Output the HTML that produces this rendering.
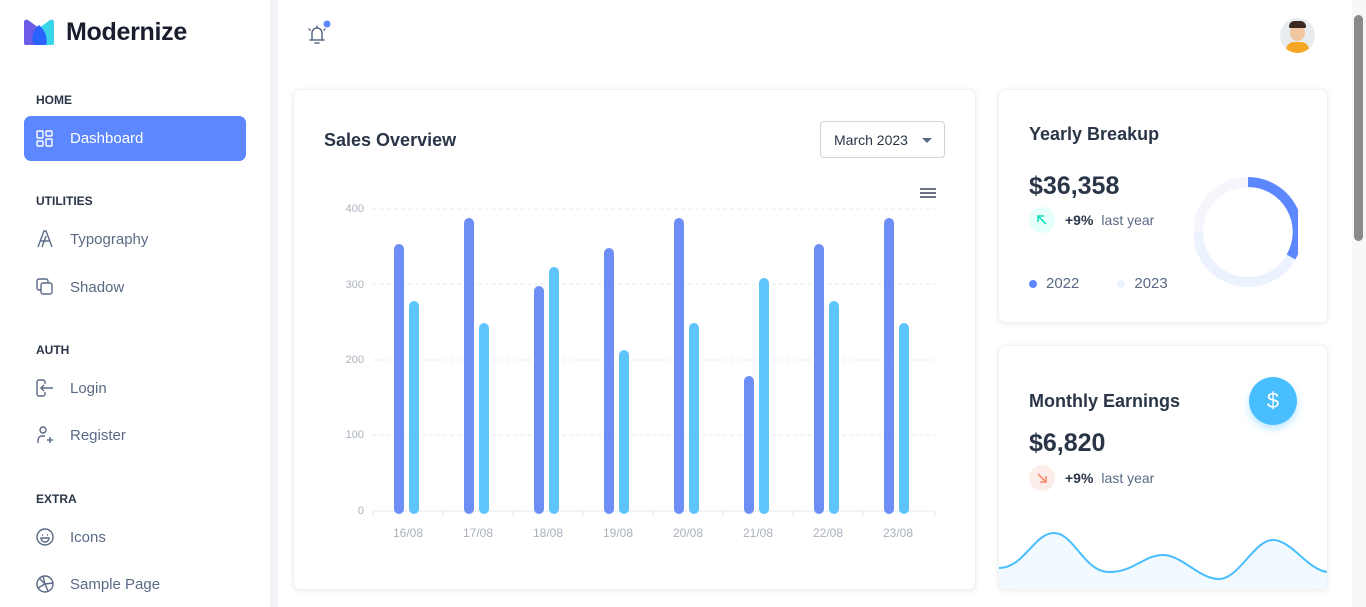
<!DOCTYPE html><html><head><style>
*{margin:0;padding:0;box-sizing:border-box}
body{width:1366px;height:607px;overflow:hidden;background:#fff;font-family:"Liberation Sans",sans-serif;color:#2a3547;position:relative}
.sb{position:absolute;left:0;top:0;width:270px;height:607px;background:#fff}
.strip{position:absolute;left:270px;top:0;width:8px;height:607px;background:#f2f4f7}
.logo{position:absolute;left:22px;top:18px;display:flex;align-items:center}
.logo span{font-size:25px;font-weight:bold;color:#1a1d2e;margin-left:10px;letter-spacing:-0.3px}
.cap{position:absolute;left:36px;font-size:12px;font-weight:bold;color:#2a3547}
.it{position:absolute;left:36px;font-size:15px;color:#5a6a85;display:flex;align-items:center}
.it svg{margin-right:16px}
.act{position:absolute;left:24px;top:116px;width:222px;height:45px;background:#5d87ff;border-radius:7px;color:#fff;font-size:15px;display:flex;align-items:center;padding-left:12px}
.card{position:absolute;background:#fff;border-radius:7px;box-shadow:0 1px 6px rgba(0,0,0,.08);border:1px solid #f0f2f5}
.t{position:absolute;font-size:18px;font-weight:bold;color:#2a3547}
.big{position:absolute;font-size:25px;font-weight:bold;color:#2a3547}
.pct{position:absolute;font-size:14px;display:flex;align-items:center}
.pct b{color:#2a3547;margin:0 8px 0 10px}
.pct i{font-style:normal;color:#5a6a85}
</style></head><body>
<div class="sb">
<div class="logo"><svg width="34" height="28" viewBox="0 0 34 28"><path d="M2 3C2 1 4 0 6 1L17 9 17 26 4 26C2 26 2 25 2 23Z" fill="#6c5ce7"/><path d="M32 3C32 1 30 0 28 1L17 9 17 26 30 26C32 26 32 25 32 23Z" fill="#3ad6e8"/><path d="M17 6C10 12 9 20 12 26L24 26C26 20 24 12 17 6Z" fill="#2962ff"/></svg><span>Modernize</span></div>
<div class="cap" style="top:93px">HOME</div>
<div class="act"><svg width="18" height="18" viewBox="0 0 18 18" fill="none" stroke="#fff" stroke-width="1.4" style="margin-right:16px"><rect x="1" y="1" width="6" height="7" rx="1"/><rect x="1" y="11" width="6" height="5" rx="1"/><rect x="10" y="1" width="6" height="5" rx="1"/><rect x="10" y="9" width="6" height="7" rx="1"/></svg>Dashboard</div>
<div class="cap" style="top:194px">UTILITIES</div>
<div class="it" style="top:230px"><svg width="18" height="18" viewBox="0 0 18 18" fill="none" stroke="#5a6a85" stroke-width="1.4"><path d="M2 17L8 1 10 1 16 17M5 11H13M6 17L10 6"/></svg>Typography</div>
<div class="it" style="top:278px"><svg width="18" height="18" viewBox="0 0 18 18" fill="none" stroke="#5a6a85" stroke-width="1.4"><rect x="5" y="5" width="11" height="11" rx="2"/><path d="M12 5V3A2 2 0 0 0 10 1H3A2 2 0 0 0 1 3V10A2 2 0 0 0 3 12H5"/></svg>Shadow</div>
<div class="cap" style="top:343px">AUTH</div>
<div class="it" style="top:379px"><svg width="18" height="18" viewBox="0 0 18 18" fill="none" stroke="#5a6a85" stroke-width="1.4"><path d="M9 5V3A2 2 0 0 0 7 1H3A2 2 0 0 0 1 3V15A2 2 0 0 0 3 17H7A2 2 0 0 0 9 15V13M17 9H5L8 6M5 9L8 12"/></svg>Login</div>
<div class="it" style="top:426px"><svg width="18" height="18" viewBox="0 0 18 18" fill="none" stroke="#5a6a85" stroke-width="1.4"><circle cx="7" cy="4" r="3"/><path d="M2 17V14A4 4 0 0 1 6 10H9M11 14H17M14 11V17"/></svg>Register</div>
<div class="cap" style="top:492px">EXTRA</div>
<div class="it" style="top:528px"><svg width="18" height="18" viewBox="0 0 18 18" fill="none" stroke="#5a6a85" stroke-width="1.4"><circle cx="9" cy="9" r="8"/><path d="M6 7H7M11 7H12M5 10H13A4 4 0 0 1 5 10Z"/></svg>Icons</div>
<div class="it" style="top:575px"><svg width="18" height="18" viewBox="0 0 18 18" fill="none" stroke="#5a6a85" stroke-width="1.4"><circle cx="9" cy="9" r="8"/><path d="M7 1L9 9M17 8L9 9M12 16L9 9M2 13L9 9M3 3L9 9"/></svg>Sample Page</div>
</div>
<div class="strip"></div>
<svg style="position:absolute;left:304px;top:18px" width="30" height="30" viewBox="0 0 30 30" fill="none" stroke="#5a6a85" stroke-width="1.5" stroke-linecap="round"><path d="M6 22H20M8 22V15A5 5 0 0 1 18 15V22M11 25H15M13 8V10M5 11L6 12M21 11L20 12"/><circle cx="23" cy="6" r="3.5" fill="#5d87ff" stroke="none"/></svg>
<div style="position:absolute;left:1280px;top:18px;width:35px;height:35px;border-radius:50%;background:#e8ecef;overflow:hidden"><div style="position:absolute;left:10px;top:6px;width:15px;height:17px;border-radius:50%;background:#f1c6a0"></div><div style="position:absolute;left:9px;top:3px;width:17px;height:7px;border-radius:8px 8px 2px 2px;background:#3b2a22"></div><div style="position:absolute;left:6px;top:24px;width:23px;height:14px;border-radius:8px 8px 0 0;background:#f5a623"></div></div>
<div style="position:absolute;left:1352px;top:0;width:14px;height:607px;background:#f7f7f7"></div>
<div style="position:absolute;left:1354px;top:15px;width:9px;height:226px;background:#8a8a8a;border-radius:5px"></div>

<div class="card" style="left:293px;top:89px;width:683px;height:501px">
<div class="t" style="left:30px;top:40px">Sales Overview</div>
<div style="position:absolute;left:526px;top:31px;width:125px;height:37px;border:1px solid #cfd4dc;border-radius:4px;font-size:14px;color:#2a3547;padding:10px 0 0 13px">March 2023<span style="position:absolute;right:12px;top:16px;border:5px solid transparent;border-top-color:#5a6a85"></span></div>
<div style="position:absolute;left:626px;top:98px;width:16px;height:2px;background:#6b7280;box-shadow:0 4px 0 #6b7280,0 8px 0 #6b7280"></div>
</div>
<svg style="position:absolute;left:293px;top:89px" width="683" height="480">
<g stroke="#e5e9ef" stroke-dasharray="4 3"><line x1="80" x2="642" y1="120" y2="120"/><line x1="80" x2="642" y1="195" y2="195"/><line x1="80" x2="642" y1="271" y2="271"/><line x1="80" x2="642" y1="346" y2="346"/></g>
<line x1="80" x2="642" y1="422" y2="422" stroke="#e5e9ef"/>
<g stroke="#e5e9ef"><line x1="80" x2="80" y1="422" y2="428"/><line x1="150" x2="150" y1="422" y2="428"/><line x1="220" x2="220" y1="422" y2="428"/><line x1="290" x2="290" y1="422" y2="428"/><line x1="360" x2="360" y1="422" y2="428"/><line x1="430" x2="430" y1="422" y2="428"/><line x1="500" x2="500" y1="422" y2="428"/><line x1="570" x2="570" y1="422" y2="428"/><line x1="642" x2="642" y1="422" y2="428"/></g>
<g fill="#aab1bd" font-size="11" font-family="Liberation Sans" text-anchor="end"><text x="71" y="123">400</text><text x="71" y="199">300</text><text x="71" y="274">200</text><text x="71" y="349">100</text><text x="71" y="425">0</text></g>
<g fill="#aab1bd" font-size="12" font-family="Liberation Sans" text-anchor="middle"><text x="115" y="448">16/08</text><text x="185" y="448">17/08</text><text x="255" y="448">18/08</text><text x="325" y="448">19/08</text><text x="395" y="448">20/08</text><text x="465" y="448">21/08</text><text x="535" y="448">22/08</text><text x="605" y="448">23/08</text></g>
<g fill="#6c8ef5"><rect x="101" y="155" width="10" height="270" rx="5"/><rect x="171" y="129" width="10" height="296" rx="5"/><rect x="241" y="197" width="10" height="228" rx="5"/><rect x="311" y="159" width="10" height="266" rx="5"/><rect x="381" y="129" width="10" height="296" rx="5"/><rect x="451" y="287" width="10" height="138" rx="5"/><rect x="521" y="155" width="10" height="270" rx="5"/><rect x="591" y="129" width="10" height="296" rx="5"/></g>
<g fill="#5ec5fb"><rect x="116" y="212" width="10" height="213" rx="5"/><rect x="186" y="234" width="10" height="191" rx="5"/><rect x="256" y="178" width="10" height="247" rx="5"/><rect x="326" y="261" width="10" height="164" rx="5"/><rect x="396" y="234" width="10" height="191" rx="5"/><rect x="466" y="189" width="10" height="236" rx="5"/><rect x="536" y="212" width="10" height="213" rx="5"/><rect x="606" y="234" width="10" height="191" rx="5"/></g>
</svg>

<div class="card" style="left:998px;top:89px;width:330px;height:234px;overflow:hidden">
<div class="t" style="left:30px;top:34px">Yearly Breakup</div>
<div class="big" style="left:30px;top:82px">$36,358</div>
<div class="pct" style="left:30px;top:117px"><span style="width:26px;height:26px;border-radius:50%;background:#e6fffa;display:flex;align-items:center;justify-content:center"><svg width="12" height="12" viewBox="0 0 12 12" fill="none" stroke="#13deb9" stroke-width="1.6"><path d="M10 10L2 2M2 8V2H8"/></svg></span><b>+9%</b><i>last year</i></div>
<div style="position:absolute;left:30px;top:185px;font-size:15px;color:#5a6a85;display:flex;align-items:center"><span style="width:8px;height:8px;border-radius:50%;background:#5d87ff;margin-right:9px"></span>2022<span style="width:8px;height:8px;border-radius:50%;background:#ecf2ff;margin:0 9px 0 38px"></span>2023</div>
<svg style="position:absolute;left:195px;top:85px" width="104" height="115"><circle cx="54" cy="57" r="50" fill="none" stroke="#ecf2ff" stroke-width="10"/><path d="M4 57A50 50 0 0 1 54 7" fill="none" stroke="#f4f6fb" stroke-width="10"/><path d="M54 7A50 50 0 0 1 97 82" fill="none" stroke="#5d87ff" stroke-width="10"/></svg>
</div>

<div class="card" style="left:998px;top:345px;width:330px;height:245px;overflow:hidden">
<div class="t" style="left:30px;top:45px">Monthly Earnings</div>
<div style="position:absolute;left:250px;top:31px;width:48px;height:48px;border-radius:50%;background:#49beff;box-shadow:0 4px 8px rgba(73,190,255,.35);color:#fff;font-size:22px;display:flex;align-items:center;justify-content:center">$</div>
<div class="big" style="left:30px;top:83px">$6,820</div>
<div class="pct" style="left:30px;top:119px"><span style="width:26px;height:26px;border-radius:50%;background:#fdede8;display:flex;align-items:center;justify-content:center"><svg width="12" height="12" viewBox="0 0 12 12" fill="none" stroke="#fa896b" stroke-width="1.6"><path d="M2 2L10 10M10 4V10H4"/></svg></span><b>+9%</b><i>last year</i></div>
<svg style="position:absolute;left:0;top:170px" width="330" height="75"><path d="M0 52C25 52 35 17 55 17S85 56 110 56 145 39 164 39 200 63 220 63 255 24 274 24 310 56 330 56V75H0Z" fill="#f2f9ff"/><path d="M0 52C25 52 35 17 55 17S85 56 110 56 145 39 164 39 200 63 220 63 255 24 274 24 310 56 330 56" fill="none" stroke="#49beff" stroke-width="2"/></svg>
</div>
</body></html>
